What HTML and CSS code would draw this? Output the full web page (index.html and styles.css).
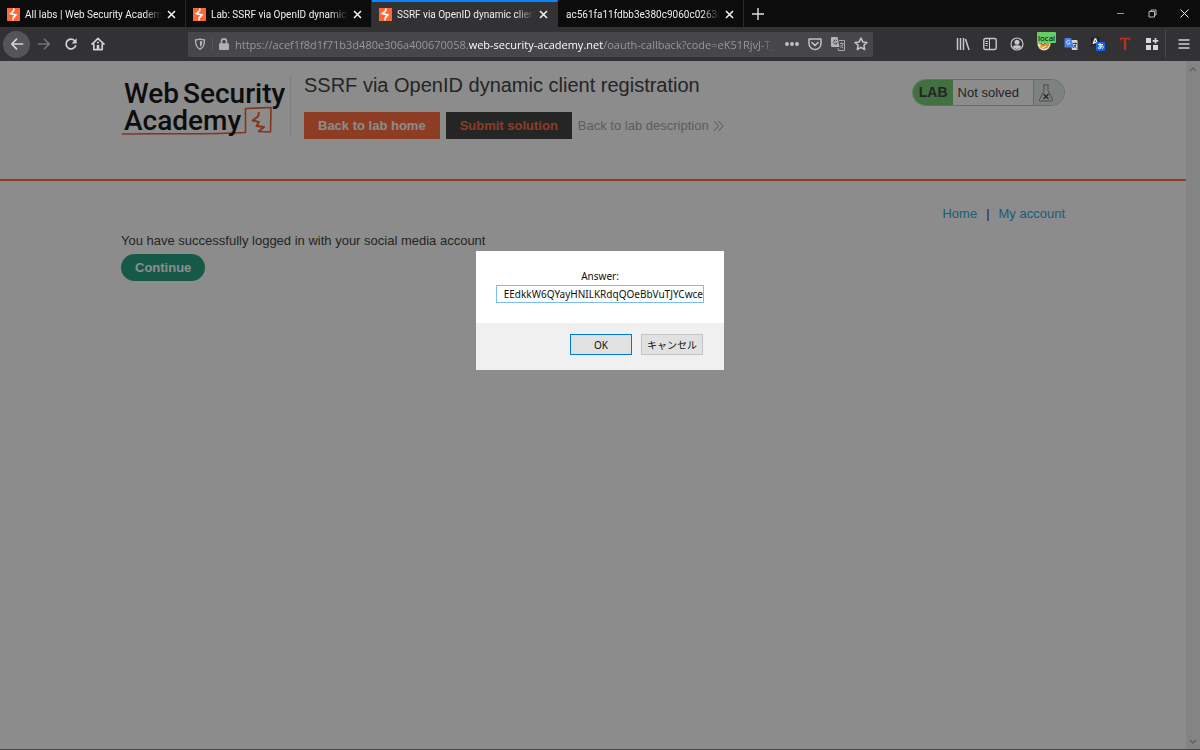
FILE: index.html
```
<!DOCTYPE html>
<html lang="en">
<head>
  <meta charset="UTF-8">
  <title>SSRF via OpenID dynamic client registration</title>
  <link rel="stylesheet" href="styles.css">
</head>
<body>

<svg class="symbols" aria-hidden="true">
  <symbol id="burp" viewBox="0 0 13 13">
    <rect width="13" height="13" fill="#ff6633"/>
    <path d="M7 0.500 6.600 2.800 3.500 5.500 8.800 7 6.200 9.800 6 12.500" fill="none" stroke="#fff" stroke-width="1.700"/>
  </symbol>
  <symbol id="close" viewBox="0 0 9 9">
    <path d="M1 1l7 7M8 1l-7 7" fill="none" stroke="#f4f4f4" stroke-width="1.500"/>
  </symbol>
</svg>

<div id="app">
  <div class="titlebar">
    <div class="tab">
      <svg class="favicon"><use href="#burp"/></svg>
      <span class="tab-title">All labs | Web Security Academy</span>
      <button class="tab-close" aria-label="Close tab"><svg><use href="#close"/></svg></button>
    </div>
    <div class="tab">
      <svg class="favicon"><use href="#burp"/></svg>
      <span class="tab-title">Lab: SSRF via OpenID dynamic c</span>
      <button class="tab-close" aria-label="Close tab"><svg><use href="#close"/></svg></button>
    </div>
    <div class="tab active">
      <svg class="favicon"><use href="#burp"/></svg>
      <span class="tab-title">SSRF via OpenID dynamic client</span>
      <button class="tab-close" aria-label="Close tab"><svg><use href="#close"/></svg></button>
    </div>
    <div class="tab">
      <span class="tab-title">ac561fa11fdbb3e380c9060c026300</span>
      <button class="tab-close" aria-label="Close tab"><svg><use href="#close"/></svg></button>
    </div>
    <button class="new-tab" aria-label="New tab">
      <svg viewBox="0 0 12 12" width="12" height="12"><path d="M6 0v12M0 6h12" stroke="#ddd" stroke-width="1.4"/></svg>
    </button>
    <div class="window-controls">
      <button aria-label="Minimize"><svg viewBox="0 0 9 9" width="9" height="9"><path d="M1 4.500h7" stroke="#999"/></svg></button>
      <button aria-label="Restore"><svg viewBox="0 0 9 9" width="9" height="9" fill="none" stroke="#bbb"><path d="M1 2.500h5.500v5.500H1zM3 2.500V1h5v5H6.500"/></svg></button>
      <button aria-label="Close window"><svg viewBox="0 0 9 9" width="9" height="9"><path d="M.5.5l8 8M8.500.5l-8 8" stroke="#eee"/></svg></button>
    </div>
  </div>

  <div class="toolbar">
    <div class="nav">
      <button class="back" aria-label="Back">
        <svg viewBox="0 0 16 16"><path d="M14.500 8H2M7.500 2.500 2 8l5.500 5.500" fill="none" stroke="#d6d6d8" stroke-width="1.9" stroke-linecap="round" stroke-linejoin="round"/></svg>
      </button>
      <button aria-label="Forward">
        <svg viewBox="0 0 16 16"><path d="M1.500 8H14M8.500 2.500 14 8l-5.500 5.500" fill="none" stroke="#77777a" stroke-width="1.700" stroke-linecap="round" stroke-linejoin="round"/></svg>
      </button>
      <button aria-label="Reload">
        <svg viewBox="0 0 16 16"><path d="M13.200 10.200A5.600 5.600 0 1 1 12.200 4.300" fill="none" stroke="#d0d0d2" stroke-width="2" stroke-linecap="round"/><path d="M14.500 1.300v6H8.700z" fill="#d0d0d2"/></svg>
      </button>
      <button aria-label="Home">
        <svg viewBox="0 0 16 16"><path d="M1.200 8.200 8 1.500l6.800 6.700M3.200 7.500v7h9.600v-7" fill="none" stroke="#d0d0d2" stroke-width="1.900" stroke-linecap="round" stroke-linejoin="round"/><path d="M6.500 14V9h3v5zM7 5.500h2v2H7z" fill="#d0d0d2"/></svg>
      </button>
    </div>

    <div class="urlbar">
      <button class="shield" aria-label="Tracking protection">
        <svg viewBox="0 0 12 12"><path d="M6 .9c1.400.7 2.800 1 4.500 1 0 4.500-.8 7.600-4.500 9.300C2.300 9.500 1.500 6.400 1.500 1.900c1.700 0 3.100-.3 4.500-1z" fill="none" stroke="#b8b8ba" stroke-width="1.300"/><path d="M6 3v6c1.700-1.200 2.300-2.800 2.400-5.400C7.500 3.500 6.700 3.300 6 3z" fill="#b8b8ba"/></svg>
      </button>
      <button class="lock" aria-label="Site information">
        <svg viewBox="0 0 12 12"><path d="M3.500 6V3.400a2.500 2.500 0 0 1 5 0V6" fill="none" stroke="#b0b0b2" stroke-width="1.600"/><rect x="1" y="5.300" width="10" height="6.700" rx="1" fill="#b0b0b2"/></svg>
      </button>
      <div class="url" role="textbox" aria-label="Address">https://acef1f8d1f71b3d480e306a400670058.<span class="domain">web-security-academy.net</span>/oauth-callback?code=eK51RjvJ-T_6</div>
      <div class="url-actions">
        <button aria-label="Page actions">
          <svg viewBox="0 0 14 14" fill="#c4c4c6"><circle cx="2" cy="7" r="1.900"/><circle cx="7" cy="7" r="1.900"/><circle cx="12" cy="7" r="1.900"/></svg>
        </button>
        <button aria-label="Save to Pocket">
          <svg viewBox="0 0 14 14" fill="none" stroke="#c0c0c2" stroke-linecap="round" stroke-linejoin="round"><path d="M1 2h12v4.500a6 6 0 0 1-12 0z" stroke-width="1.500"/><path d="M4 5.500l3 3 3-3" stroke-width="1.600"/></svg>
        </button>
        <button aria-label="Translate page">
          <svg viewBox="0 0 14 14"><path d="M1 0h5.500l2 10H1a1 1 0 0 1-1-1V1a1 1 0 0 1 1-1z" fill="#b4b4b6"/><path d="M8 3.500h5.500v10H7.500L7 11M9 6.500h3.500M10.500 5.500v1M12 7c-.5 2-1.500 3-2.700 4M9.500 8c.5 1.300 1.500 2.300 2.700 3" fill="none" stroke="#a8a8aa"/><path d="M6 3.800A2 2 0 1 0 6.300 6H4.500" fill="none" stroke="#505052"/></svg>
        </button>
        <button aria-label="Bookmark this page">
          <svg viewBox="0 0 14 14"><path d="M7 1l1.800 3.900 4.200.5-3.100 2.900.8 4.200L7 10.400l-3.700 2.100.8-4.200L1 5.400l4.200-.5z" fill="none" stroke="#c4c4c6" stroke-width="1.500" stroke-linejoin="round"/></svg>
        </button>
      </div>
    </div>

    <div class="extensions">
      <button aria-label="Library">
        <svg viewBox="0 0 14 14"><path d="M1.500 1v12M4.500 1v12M7.500 1v12M9.500 2l3.500 11" fill="none" stroke="#c8c8ca" stroke-width="1.500"/></svg>
      </button>
      <button aria-label="Sidebars">
        <svg viewBox="0 0 14 14"><rect x=".8" y="1.500" width="12.400" height="11" rx="1.600" fill="none" stroke="#c8c8ca" stroke-width="1.400"/><path d="M6.500 2v10M2.500 4.500h2.500M2.500 6.500h2.500M2.500 8.500h2" stroke="#c8c8ca" stroke-width="1"/></svg>
      </button>
      <button aria-label="Account">
        <svg viewBox="0 0 14 14"><circle cx="7" cy="7" r="6" fill="none" stroke="#c8c8ca" stroke-width="1.200"/><circle cx="7" cy="5.300" r="2.500" fill="#c8c8ca"/><path d="M2.800 9.500C4 8.500 5 8.300 7 8.300s3 .2 4.200 1.200C10.200 11.300 8.800 12 7 12s-3.200-.7-4.200-2.500z" fill="#c8c8ca"/></svg>
      </button>
      <button class="foxyproxy" aria-label="FoxyProxy">
        <svg viewBox="0 0 14 14"><circle cx="7" cy="7" r="6.500" fill="#f0dcc0"/><path d="M1 6l3-1 2 2 3-3 4 1-1 4-2 2-4 1-3-2 1-2z" fill="#e5912c"/><path d="M3 5l3 3 4-3" stroke="#94602c" fill="none"/><path d="M5 11l4-2" stroke="#fff" fill="none"/></svg>
        <span class="badge">local</span>
      </button>
      <button aria-label="Google Translate">
        <svg viewBox="0 0 14 14"><path d="M6 3h6.500a1 1 0 0 1 1 1v9H8z" fill="#d5d5d5"/><path d="M1.500 1h5.500l3 9.500H1.500a1 1 0 0 1-1-1V2a1 1 0 0 1 1-1z" fill="#4a80e8"/><path d="M6 4.200A1.900 1.900 0 1 0 6.200 6H4.500" fill="none" stroke="#d8e4ff" stroke-width=".9"/><path d="M9 6.500h3.800M11 5.500v1M12 7c-.4 1.800-1.400 3-2.600 4M10 8c.4 1 1.300 2 2.500 3" fill="none" stroke="#444"/></svg>
      </button>
      <button aria-label="Translator">
        <svg viewBox="0 0 14 14"><rect x="0" y="0" width="9" height="9" rx="1" fill="#252527"/><path d="M2 7l2-5h.8L6.500 7M3 5.500h3" fill="none" stroke="#eee" stroke-width="1.300"/><rect x="5" y="5" width="9" height="9" rx="1.200" fill="#1467e8"/><path d="M7 7.500h5M9 6.200c-.2 2.800 0 4 .6 5.500M11 8.500c-.5 2-2 3.300-3.300 3-1-.8 1-2.500 3-2.500s2.200 2 .2 2.700" fill="none" stroke="#fff" stroke-width=".9"/></svg>
      </button>
      <button aria-label="Text tool">
        <svg viewBox="0 0 14 14"><path d="M2.500 3.500V1.500h9v2" fill="none" stroke="#b9301d" stroke-width="1.300"/><path d="M5.800 1.500h2.400V13H5.800z" fill="#b9301d"/></svg>
      </button>
      <button aria-label="Add-ons">
        <svg viewBox="0 0 14 14"><path d="M1 1h5v5H1zM1 8h5v5H1zM8 8h5v5H8z" fill="#d8d8da"/><path d="M10.500 1v5.500M7.700 3.800h5.600" stroke="#d8d8da" stroke-width="1.700"/></svg>
      </button>
    </div>
    <button class="menu" aria-label="Open menu">
      <svg viewBox="0 0 12 12" width="12" height="12"><path d="M1 2h10M1 6h10M1 10h10" stroke="#d0d0d2" stroke-width="1.500" stroke-linecap="round"/></svg>
    </button>
  </div>

  <div class="viewport">
    <div class="page">
      <header class="lab-header">
        <div class="container">
          <a class="logo" href="#" aria-label="Web Security Academy">
            <svg viewBox="0 0 168 62">
              <text x="3" y="27">Web</text>
              <text x="62" y="27">Security</text>
              <path d="M1 58C40 57 80 59 124.500 56.500L124.500 32.500 150 31.500 149.500 56 137 55.500" fill="none" stroke="#f0602f" stroke-width="1.600" stroke-linejoin="round"/>
              <path d="M138 36l-1 4.500-5.500 4 6.500 1.500-2.500 4 7.500 1-5.500 4.500" fill="none" stroke="#f0602f" stroke-width="1.900" stroke-linejoin="round"/>
              <text x="3" y="54">Academy</text>
            </svg>
          </a>
          <div class="lab-title">
            <h2>SSRF via OpenID dynamic client registration</h2>
            <div class="lab-actions">
              <a class="button-orange" href="#">Back to lab home</a>
              <button class="button-dark">Submit solution</button>
              <a class="link-back" href="#">Back to lab description
                <svg viewBox="0 0 11 12" width="11" height="12"><path d="M1 1l4.500 5L1 11M5.500 1 10 6l-4.500 5" fill="none" stroke="#a0a0a0"/></svg>
              </a>
            </div>
          </div>
          <div class="lab-status">
            <span class="status-label">LAB</span>
            <span class="status-text">Not solved</span>
            <span class="status-icon">
              <svg viewBox="0 0 16 18" width="16" height="18"><path d="M5 1h6M6 1v5.500L1.500 15.500q-.5 1.500 1 1.500h11q1.500 0 1-1.500L10 6.500V1" fill="none" stroke="#888"/><path d="M5.500 10l5 5M10.500 10l-5 5" stroke="#444" stroke-width="1.300"/></svg>
            </span>
          </div>
        </div>
      </header>

      <main class="container content">
        <nav class="top-links">
          <a href="#">Home</a><span>|</span><a href="#">My account</a>
        </nav>
        <p>You have successfully logged in with your social media account</p>
        <a class="button-green" href="#">Continue</a>
      </main>
    </div>

    <div class="scrollbar">
      <svg viewBox="0 0 8 6" width="8" height="6"><path d="M1 5l3-3 3 3" fill="none" stroke="#aaa" stroke-width="1.300"/></svg>
      <svg viewBox="0 0 8 6" width="8" height="6"><path d="M1 1l3 3 3-3" fill="none" stroke="#aaa" stroke-width="1.300"/></svg>
    </div>

    <div class="overlay">
      <form class="prompt" role="dialog" aria-label="Answer">
        <div class="prompt-body">
          <label for="answer">Answer:</label>
          <input type="text" id="answer" value="EEdkkW6QYayHNILKRdqQOeBbVuTJYCwce">
        </div>
        <div class="prompt-buttons">
          <button type="button" class="default">OK</button>
          <button type="button">キャンセル</button>
        </div>
      </form>
    </div>
  </div>
</div>

</body>
</html>
```
FILE: styles.css
```
* {
  box-sizing: border-box;
}

body {
  margin: 0;
  font-family: "Liberation Sans", Arial, sans-serif;
  font-size: 13px;
  color: #444;
}

button {
  padding: 0;
  border: 0;
  background: none;
  font: inherit;
  color: inherit;
}

a {
  text-decoration: none;
}

svg {
  display: block;
  flex-shrink: 0;
}

.symbols {
  position: absolute;
  width: 0;
  height: 0;
}

#app {
  display: flex;
  flex-direction: column;
  min-height: 100vh;
}

/* tabs */

.titlebar {
  display: flex;
  height: 27px;
  background-color: #0c0c0c;
  color: #eee;
  font-family: Roboto, sans-serif;
  font-size: 10px;
}

.tab {
  display: flex;
  align-items: center;
  flex: 0 1 186px;
  min-width: 0;
  padding: 1px 9px 0 7px;
  border-right: 1px solid #2a2a2b;
}

.tab.active {
  background-color: #323234;
  border-top: 2px solid #0a84ff;
  border-right-color: #323234;
  padding-top: 0;
}

.favicon {
  width: 13px;
  height: 13px;
  margin-right: 5px;
}

.tab-title {
  flex: 1;
  overflow: hidden;
  white-space: nowrap;
  mask-image: linear-gradient(to left, transparent, #000 18px);
}

.tab-close {
  margin-left: 5px;
}

.tab-close svg {
  width: 9px;
  height: 9px;
}

.tab:not(:has(.favicon)) {
  padding-left: 8px;
}

.new-tab {
  padding: 0 8px;
}

.window-controls {
  display: flex;
  margin-left: auto;
}

.window-controls button {
  display: flex;
  align-items: center;
  justify-content: center;
  width: 32px;
}

/* toolbar */

.toolbar {
  display: flex;
  align-items: center;
  height: 34px;
  padding: 0 3px;
  background-color: #323234;
  font-family: "Open Sans", sans-serif;
  font-size: 11px;
}

.nav,
.extensions,
.url-actions {
  display: flex;
}

.nav button,
.extensions button {
  display: flex;
  align-items: center;
  justify-content: center;
  width: 27px;
  height: 27px;
}

.nav svg,
.extensions svg,
.url-actions svg {
  width: 14px;
  height: 14px;
}

.nav .back {
  border-radius: 50%;
  background-color: #555557;
}

.urlbar {
  display: flex;
  align-items: center;
  flex: 1;
  min-width: 0;
  height: 25px;
  margin: 0 76px 0 77px;
  padding: 0 5px 0 6px;
  border-radius: 2px;
  background-color: #474749;
}

.urlbar .shield {
  padding-right: 6px;
  border-right: 1px solid #565660;
}

.urlbar .lock {
  padding: 0 5px;
}

.shield svg,
.lock svg {
  width: 12px;
  height: 12px;
}

.url {
  flex: 1;
  overflow: hidden;
  white-space: nowrap;
  color: #97979a;
  mask-image: linear-gradient(to left, transparent, #000 18px);
}

.url .domain {
  color: #f9f9fa;
}

.url-actions {
  gap: 9px;
  margin-left: 8px;
}

.extensions .foxyproxy {
  position: relative;
}

.badge {
  position: absolute;
  top: 1px;
  left: 7px;
  padding: 0 1px;
  border-radius: 1px;
  background-color: #66cc66;
  color: #000;
  font-size: 8px;
  line-height: 11px;
  white-space: nowrap;
}

.menu {
  margin-left: auto;
  padding: 8px 7px 8px 12px;
  border-left: 1px solid #48484a;
}

/* page */

.viewport {
  position: relative;
  display: flex;
  flex: 1;
  border-bottom: 1px solid #4a4648;
  background-color: #fff;
}

.page {
  flex: 1;
}

.container {
  max-width: 944px;
  margin: 0 auto;
}

.lab-header {
  height: 120px;
  padding-top: 15px;
  border-bottom: 2px solid #ff7043;
}

.lab-header .container {
  display: flex;
  align-items: flex-start;
}

.logo {
  padding-right: 1px;
  border-right: 1px solid #e8e8e8;
}

.logo svg {
  width: 168px;
  height: 62px;
  fill: #181818;
  font-family: Roboto, sans-serif;
  font-size: 28px;
  font-weight: 500;
}

.lab-title {
  flex: 1;
  margin-left: 13px;
}

.lab-title h2 {
  margin: 0 0 18px;
  font-size: 20px;
  font-weight: 400;
  line-height: 18px;
}

.lab-actions {
  display: flex;
  align-items: center;
  gap: 6px;
}

.button-orange,
.button-dark {
  height: 27px;
  padding: 0 14px;
  font-weight: 700;
  line-height: 27px;
}

.button-orange {
  background-color: #ff7043;
  color: #fff;
}

.button-dark {
  background-color: #444;
  color: #ff7043;
}

.link-back {
  display: flex;
  align-items: center;
  gap: 4px;
  color: #aaa;
}

.lab-status {
  display: flex;
  height: 27px;
  margin-top: 3px;
  border: 1px solid #a0dca0;
  border-radius: 14px;
  overflow: hidden;
  line-height: 25px;
}

.status-label {
  padding: 0 5px 0 6px;
  background-color: #7acc75;
  font-size: 14px;
  font-weight: 700;
}

.status-text {
  padding: 0 14px 0 5px;
}

.status-icon {
  display: flex;
  align-items: center;
  padding: 0 10px 0 4px;
  border-left: 1px solid #a0dca0;
  background-color: #e4ecec;
}

.content {
  padding-top: 25px;
}

.top-links {
  display: flex;
  justify-content: flex-end;
  gap: 9px;
  line-height: 16px;
}

.top-links a {
  color: #38a8d8;
}

.content p {
  margin: 11px 0 5px;
  line-height: 16px;
}

.button-green {
  display: inline-block;
  padding: 0 14px;
  border-radius: 14px;
  background-color: #29a383;
  color: #fff;
  font-weight: 700;
  line-height: 27px;
}

.scrollbar {
  display: flex;
  flex-direction: column;
  align-items: center;
  justify-content: space-between;
  width: 14px;
  padding: 5px 0 4px;
  background-color: #f0f0f0;
}

/* prompt */

.overlay {
  position: absolute;
  inset: 0;
  display: flex;
  align-items: flex-start;
  justify-content: center;
  padding-top: 190px;
  background-color: rgba(0, 0, 0, 0.45);
}

.prompt {
  width: 248px;
  background-color: #fff;
  color: #111;
  font-family: "Noto Sans", "Noto Sans CJK JP", sans-serif;
  font-size: 10px;
}

.prompt-body {
  display: flex;
  flex-direction: column;
  gap: 2px;
  padding: 18px 20px 20px;
  text-align: center;
}

.prompt-body label {
  line-height: 14px;
}

.prompt-body input {
  height: 18px;
  padding: 0;
  border: 1px solid #7ebdf0;
  outline: 0;
  background-color: #fff;
  color: #111;
  font: inherit;
  /* keeps the end of a long value in view */
  direction: rtl;
}

.prompt-buttons {
  display: flex;
  justify-content: flex-end;
  gap: 9px;
  padding: 11px 21px 15px;
  background-color: #f0f0f0;
}

.prompt-buttons button {
  width: 62px;
  height: 21px;
  border: 1px solid #c4c4c4;
  background-color: #e1e1e1;
  line-height: 16px;
}

.prompt-buttons .default {
  border-color: #0078d7;
}
```
